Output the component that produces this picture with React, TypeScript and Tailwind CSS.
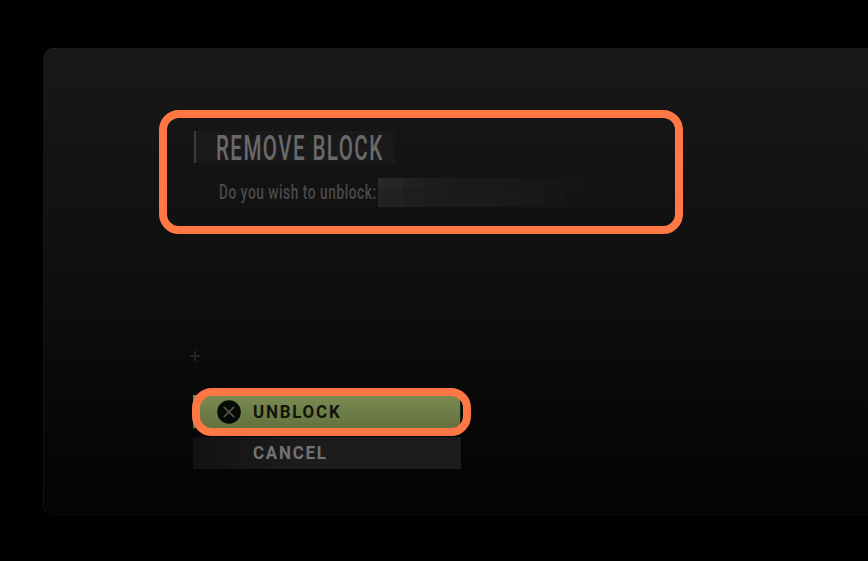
import React from 'react';

const censorCells = [
    { top: '#292929', bottom: '#242424', width: 5 },
    { top: '#272727', bottom: '#222222', width: 20 },
    { top: '#212121', bottom: '#1e1e1e', width: 20 },
    { top: '#1d1d1d', bottom: '#1c1c1c', width: 20 },
    { top: '#1b1b1b', bottom: '#1b1b1b', width: 20 },
    { top: '#191919', bottom: '#1a1a1a', width: 40 },
    { top: '#181818', bottom: '#191919', width: 20 },
    { top: '#171717', bottom: '#181818', width: 20 },
    { top: '#161616', bottom: '#161616', width: 20 },
    { top: '#151515', bottom: '#141414', width: 20 },
];

function CensoredName() {
    return (
        <div className="flex h-[29px]">
            {censorCells.map((cell, i) => (
                <div key={i} className="flex flex-col" style={{ width: cell.width }}>
                    <div className="h-[10px]" style={{ background: cell.top }} />
                    <div className="flex-1" style={{ background: cell.bottom }} />
                </div>
            ))}
        </div>
    );
}

function CrossButtonIcon() {
    return (
        <svg viewBox="0 0 24 24" className="w-6 h-6 shrink-0">
            <circle cx="12" cy="12" r="11.8" fill="#070905" />
            <path d="M6.8 6.8l10.4 10.4M17.2 6.8l-10.4 10.4" stroke="#4d5147" strokeWidth="1.7" fill="none" />
        </svg>
    );
}

function Dialog() {
    return (
        <section className="ml-[43px] mt-[48px] h-[467px] rounded-l-[10px] border border-r-0 border-t-[#1c1c1c] border-l-[#141414] border-b-[#0a0a0a] bg-linear-to-b from-[#181818] via-[#0f0f0f] via-50% to-[#040404] pl-[149px] pt-[82px]">
            <div className="flex h-8 w-[202px] items-center bg-[#191919]">
                <div className="ml-px h-8 w-[2px] shrink-0 bg-[#3a3a3a]" />
                <h1 className="ml-5 origin-left scale-x-[0.588] whitespace-nowrap pt-[3px] text-[35px] font-medium leading-8 tracking-[2.4px] text-[#696969]">
                    REMOVE BLOCK
                </h1>
            </div>

            <div className="mt-[15px] flex items-center pl-[26px]">
                <div className="w-[159px]">
                    <p className="origin-left scale-x-[0.685] whitespace-nowrap text-[20px] font-medium leading-[29px] tracking-[0.8px] text-[#4a4a4a]">
                        Do you wish to unblock:
                    </p>
                </div>
                <CensoredName />
            </div>

            <svg viewBox="0 0 10 10" className="mt-[144px] -ml-[3px] h-[10px] w-[10px]">
                <path d="M5 0v10M0 5h10" stroke="#252525" strokeWidth="2" />
            </svg>

            <div className="mt-[34px] flex w-[268px] flex-col gap-[9px]">
                <button className="flex h-[33px] w-full items-center border-r border-[#1b2112] bg-linear-to-b from-[#7b8c52] to-[#63713f] pl-6">
                    <CrossButtonIcon />
                    <span className="ml-[12px] origin-left scale-x-[0.89] whitespace-nowrap pt-px text-[19px] font-bold tracking-[2px] text-[#11150b]">
                        UNBLOCK
                    </span>
                </button>
                <button className="flex h-8 w-full items-center bg-linear-to-r from-[#121212] to-[#1c1c1c] to-40% pl-[60px]">
                    <span className="origin-left scale-x-[0.89] whitespace-nowrap pt-px text-[19px] font-bold tracking-[2px] text-[#737373]">
                        CANCEL
                    </span>
                </button>
            </div>
        </section>
    );
}

export default function App() {
    return (
        <main className="relative flow-root h-[561px] w-[868px] overflow-hidden bg-black font-['Roboto',sans-serif]">
            <Dialog />
            <div className="pointer-events-none absolute left-[159px] top-[110px] h-[124px] w-[524px] rounded-[20px] border-8 border-[#ff7745]" />
            <div className="pointer-events-none absolute left-[192px] top-[388px] h-[48px] w-[279px] rounded-[20px] border-8 border-[#ff7745]" />
        </main>
    );
}
